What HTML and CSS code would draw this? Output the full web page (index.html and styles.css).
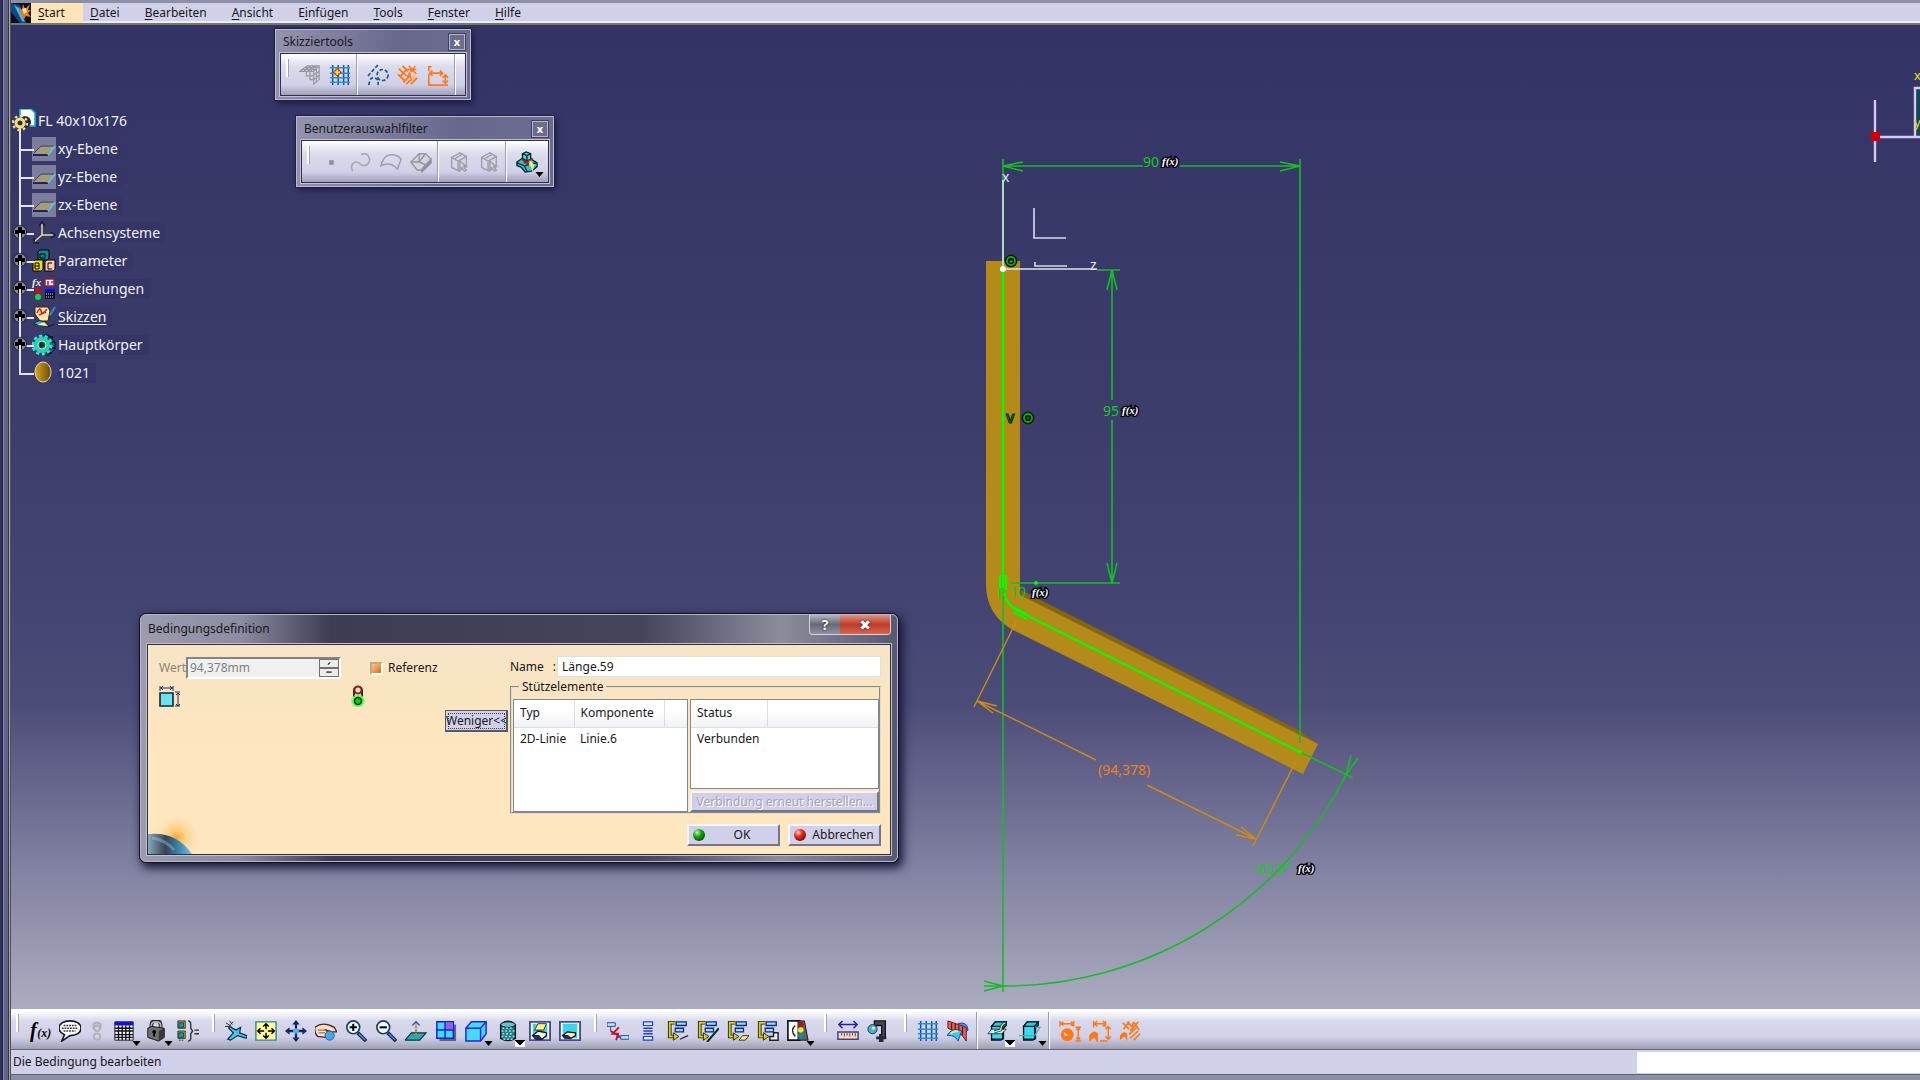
FILE: index.html
```html
<!DOCTYPE html>
<html lang="de">
<head>
<meta charset="utf-8">
<title>FL 40x10x176</title>
<link rel="stylesheet" href="styles.css">
</head>
<body>
<svg class="sprite" aria-hidden="true">
  <defs>
    <linearGradient id="ball" x1="0" x2="1"><stop offset="0" stop-color="#d9a520"/><stop offset="1" stop-color="#6b4c05"/></linearGradient>
    <radialGradient id="green" cx=".35" cy=".3" r=".7"><stop offset="0" stop-color="#c8ffb0"/><stop offset=".45" stop-color="#18b018"/><stop offset="1" stop-color="#085808"/></radialGradient>
    <radialGradient id="red" cx=".35" cy=".3" r=".7"><stop offset="0" stop-color="#ffd8c8"/><stop offset=".45" stop-color="#f03020"/><stop offset="1" stop-color="#801008"/></radialGradient>
    <radialGradient id="glow" cx=".55" cy=".45"><stop offset="0" stop-color="#ffa040"/><stop offset=".25" stop-color="#fbc870"/><stop offset="1" stop-color="#fbe6bf" stop-opacity="0"/></radialGradient>
    <linearGradient id="planet" x1="0" x2="1"><stop offset="0" stop-color="#88a8b8"/><stop offset=".4" stop-color="#344454"/><stop offset=".75" stop-color="#3c90b8"/><stop offset="1" stop-color="#80c0d8"/></linearGradient>
    <symbol id="grid" viewBox="0 0 24 24"><path d="M4 1v22M10 1v22M16 1v22M21 1v22" stroke="#2838d8" stroke-width="1.6"/><path d="M1 4h22M1 10h22M1 15h22M1 20h22" stroke="#18a0b0" stroke-width="1.6"/></symbol>
    <symbol id="fx" viewBox="0 0 24 24"><text x="1" y="19" class="ico-f">f</text><text x="9" y="19" class="ico-x">(x)</text></symbol>
    <symbol id="pick" viewBox="0 0 24 24" fill="none" stroke="#a0a0ac" stroke-width="1.6"><path d="M4 7l9-5 7 4v11l-8 5-8-4zM4 7l7 4 9-5M11 11v11M8 8l7-4"/><path d="M13 11v9l2-2 3 4 2-1-3-4h3z" fill="#d8d8e8"/></symbol>
    <symbol id="tree" viewBox="0 0 24 24"><path d="M9 3H3v15h5" fill="none" stroke="#222" stroke-width="4"/><path d="M9 3H3v15h6" fill="none" stroke="#ddd000" stroke-width="2"/><path d="M7 14l6 4-6 4z" fill="#ddd000" stroke="#222"/><path d="M10 2h11v4H10zM9 9h9v4H9z" fill="#80e8f0" stroke="#202080" stroke-width="1.4"/></symbol>
    <symbol id="plane" viewBox="0 0 24 24"><rect width="24" height="24" fill="#7d7d9e"/><path d="M2 17l7-7h13l-6 7z" fill="#a89c70"/><path d="M1 17h15v2H1z" fill="#20245c"/><path d="M16 18l7-9" stroke="#58c8d8" stroke-width="2"/><path d="M2 16l7-7h13" fill="none" stroke="#48486c"/></symbol>
    <symbol id="hatch" viewBox="0 0 24 24"><path d="M2 5l8 8M1 11l7 7M6 2l6 6M7 20l7-7M10 22l10-9M15 22l7-7M4 13l7-8M11 14l8-9" stroke="#ff7818" stroke-width="2"/><path d="M15 3v13M12 6h9M13 2l8 9M20 2l-7 9" stroke="#ff7818" stroke-width="1.6"/><path d="M14 7l8 8-4 0-1 5z" fill="#ffc8a0"/></symbol>
    <symbol id="snap" viewBox="0 0 24 24"><path d="M1 17q4-6 8-2v8l-3-5-5 4z" fill="#ff7818"/><path d="M4 3l7 7M9 2l6 6M16 2l6 9M21 2l-9 10M5 10l6-8M15 3v9M12 20l9-8M16 22l7-7M11 16l8-8" stroke="#ff7818" stroke-width="1.8"/></symbol>
    <symbol id="block" viewBox="0 0 24 24" stroke="#041828" stroke-width="1.4"><path d="M5 7l4-5h12v4l-3 3v11l-3 2H5z" fill="#108898"/><path d="M5 7h12v14H5z" fill="#38dcec"/><path d="M5 7l4-5h12l-4 5z" fill="#30c8d8"/></symbol>
    <symbol id="cursor-fx" viewBox="0 0 20 14"><text x="2" y="11" class="tag-fx">f(x)</text></symbol>
  </defs>
</svg>

<div class="app">
  <nav class="menubar" aria-label="Hauptmenü">
    <svg class="logo" viewBox="0 0 20 20"><rect width="20" height="20" fill="#08101e"/><path d="M0 0l9 2 6 18H9L0 9z" fill="#124880"/><path d="M3 2l5 3 6 14-3-1z" fill="#48b8e8"/><path d="M8 4l3 3 1-6 2 5 5-5-2 6 3 0-3 3 3 4-5-1-2 3-3-5z" fill="#f07818"/><path d="M11 6l4-1 1 4-3 2z" fill="#fff0a0"/></svg>
    <button class="menu menu-active"><u>S</u>tart</button>
    <button class="menu"><u>D</u>atei</button>
    <button class="menu"><u>B</u>earbeiten</button>
    <button class="menu"><u>A</u>nsicht</button>
    <button class="menu">E<u>i</u>nfügen</button>
    <button class="menu"><u>T</u>ools</button>
    <button class="menu"><u>F</u>enster</button>
    <button class="menu"><u>H</u>ilfe</button>
  </nav>

  <main class="canvas">
    <svg class="drawing" viewBox="11 25 1909 984" fill="none">
      <path d="M1021 590l279 141 18 13-10 3-290-146z" fill="#86650f"/>
      <path d="M986 261h34v334l298 149-15 30-290-144q-27-15-27-46z" fill="#b48a19"/>
      <g stroke="#14be24" stroke-width="1.6">
        <path d="M1003 159v833M1300 159v584M1003 166h140M1180 166h120M1023 162l-20 4 20 5M1280 162l20 4-20 5"/>
        <path d="M1097 270h23M1112 270v130M1112 420v163M1107 290l5-20 5 20M1107 563l5 20 5-20M1011 583h109"/>
        <path d="M1300 752l53 26M1346 775A383 383 0 0 1 1003 986h-19M1346 775l5-20M1346 775l12-17M984 981l19 5-19 5"/>
      </g>
      <g stroke="#d08a12" stroke-width="1.4">
        <path d="M1017 620l-43 87M1297 759l-44 87M977 701l119 59M1147 785l109 54M997 706l-20-5 16 12M1241 827l15 12-20-4"/>
      </g>
      <path d="M1003 269v314q0 20 15 28l282 141" stroke="#0f0" stroke-width="2.4"/>
      <path d="M1000 575v15M1006 575v15M1014 607l14 8M1013 612l14 7" stroke="#0f0" stroke-width="2"/>
      <circle cx="1036" cy="583" r="2" fill="#0f0"/><circle cx="1300" cy="752" r="2" fill="#0f0"/>
      <path d="M1003 180v89h94" stroke="#d8e8e0" stroke-width="1.6"/>
      <path d="M1034 208v30h32M1035 262v4h32" stroke="#dcd8f0" stroke-width="1.6"/>
      <circle cx="1003" cy="269" r="3" fill="#fff"/>
      <g class="axis"><text x="1002" y="182">x</text><text x="1090" y="270">z</text></g>
      <g class="dim"><text x="1143" y="167">90</text><text x="1103" y="416">95</text><text x="997" y="598">R</text><text x="1010" y="597">10</text><text x="1257" y="874">63.5°</text></g>
      <text x="1098" y="775" class="dim-ref">(94,378)</text>
      <g stroke="#052008" stroke-width="5"><circle cx="1011" cy="261" r="4"/><circle cx="1028" cy="418" r="4"/></g>
      <g stroke="#10a818" stroke-width="1.8"><circle cx="1011" cy="261" r="4"/><circle cx="1028" cy="418" r="4"/></g>
      <text x="1006" y="423" class="vertical">V</text>
      <use href="#cursor-fx" x="1160" y="154" width="20" height="14"/>
      <use href="#cursor-fx" x="1120" y="403" width="20" height="14"/>
      <use href="#cursor-fx" x="1030" y="585" width="20" height="14"/>
      <use href="#cursor-fx" x="1296" y="861" width="20" height="14"/>
    </svg>

    <svg class="compass" viewBox="0 0 60 120"><path d="M56 34h6v47h-6z" fill="#104858"/><path d="M15 45v62M15 82h45M55 82V33h6" fill="none" stroke="#d8c8f4" stroke-width="2.4"/><rect x="11" y="77" width="9" height="9" fill="#d40000"/><text x="54" y="25">x</text><text x="54" y="72">y</text></svg>

    <ul class="tree">
      <li class="root"><svg class="root-icon" viewBox="0 0 24 24"><path d="M8 0h11l4 4v13H8z" fill="#fff" stroke="#18b8c8" stroke-width="1.6"/><circle cx="13" cy="13" r="6" fill="#282840"/><circle cx="8" cy="14" r="4" fill="none" stroke="#f0e080" stroke-width="3"/><circle cx="8" cy="14" r="7" fill="none" stroke="#f0e080" stroke-width="2.4" stroke-dasharray="2.500 3"/><circle cx="8" cy="14" r="2" fill="#383010"/></svg><span>FL 40x10x176</span></li>
      <li><svg class="tree-icon"><use href="#plane"/></svg><span>xy-Ebene</span></li>
      <li><svg class="tree-icon"><use href="#plane"/></svg><span>yz-Ebene</span></li>
      <li><svg class="tree-icon"><use href="#plane"/></svg><span>zx-Ebene</span></li>
      <li class="node"><svg class="tree-icon" viewBox="0 0 24 24" fill="none" stroke="#e8dc90" stroke-width="1.5"><path d="M10 2v12h12M10 14l-8 7"/><path d="M7 5l3-4 3 4M19 11l4 3-4 3M2 17v5h5" stroke="#181840"/></svg><span>Achsensysteme</span></li>
      <li class="node"><svg class="tree-icon" viewBox="0 0 24 24" stroke="#000"><path d="M6 3l2-2h9v8l-2 2H6z" fill="#108890"/><path d="M1 13l2-2h8v9l-2 2H1z" fill="#e8e020"/><path d="M13 13l2-2h8v9l-2 2h-8z" fill="#f8c8b0"/><path d="M8 5h5v4H8zM3 14h4v6H3zM3 17h4M20 14h-4v6h4" fill="none"/></svg><span>Parameter</span></li>
      <li class="node"><svg class="tree-icon" viewBox="0 0 24 24"><text x="0" y="9" class="mini">fx</text><path d="M13 2h9v7h-9zM15 5h2M19 5h2M15 7h2" fill="#fff" stroke="#b01030" stroke-width="1.5"/><circle cx="6" cy="14" r="3" fill="#e00018"/><circle cx="6" cy="20" r="3" fill="#10d840"/><path d="M13 12h10v10H13z" fill="#101018"/><path d="M13 12h10v3H13z" fill="#0010f0"/><path d="M14 17h8M14 20h8" stroke="#ddd" stroke-dasharray="1 1"/></svg><span>Beziehungen</span></li>
      <li class="node"><svg class="tree-icon" viewBox="0 0 24 24"><path d="M3 2h13l2 4-2 10H8L3 9z" fill="#ffe8a8" stroke="#302810"/><path d="M5 8q3-7 4-2t6-2M7 10l7-3" fill="none" stroke="#d02020" stroke-width="1.5"/><path d="M23 2l-5 8" stroke="#2098b8" stroke-width="2"/><path d="M2 19q5-6 10-1t11 1l-8 3z" fill="#30b8d0" stroke="#102040"/><path d="M5 20l7-3 4 4z" fill="#fff4a0"/></svg><span><u>Skizzen</u></span></li>
      <li class="node"><svg class="tree-icon" viewBox="0 0 24 24"><path d="M9 2h8l6 7v7l-6 6H9z" fill="#106878" stroke="#041828"/><path d="M14 4h7M17 9h6M16 15h7M14 20h6" stroke="#061830" stroke-width="2"/><circle cx="10" cy="12" r="9" fill="none" stroke="#38e0d8" stroke-width="3" stroke-dasharray="3.200 2.400"/><circle cx="10" cy="12" r="6" fill="none" stroke="#28d0c0" stroke-width="4"/><circle cx="10" cy="12" r="4" fill="none" stroke="#e8f060"/><circle cx="10" cy="12" r="2" fill="#103048"/></svg><span>Hauptkörper</span></li>
      <li class="last"><svg class="tree-icon" viewBox="0 0 24 24"><ellipse cx="11" cy="11" rx="8" ry="10" fill="url(#ball)" stroke="#e8dcb0"/></svg><span>1021</span></li>
    </ul>

    <section class="palette palette-sketch">
      <header><h2>Skizziertools</h2><button class="palette-close" aria-label="Schließen">x</button></header>
      <div class="palette-bar">
        <i class="handle"></i>
        <button class="tool" aria-label="Rasteransicht"><svg viewBox="0 0 24 24" fill="none" stroke="#9898a4" stroke-width="1.3"><path d="M1 8l8-6h13v15l-6 5V8zM1 8h15M4 6h15M6 4h13M5 8l8-6M9 8l8-6M12 8l7-6M16 12l6-4M16 17l6-5M16 8l6-6M19 5v15M8 8v5h8M12 8v9h4"/></svg></button>
        <button class="tool" aria-label="Raster"><svg viewBox="0 0 24 24"><use href="#grid"/><path d="M9 4l5 5-5 5-5-5z" fill="#e81010"/><path d="M9 6v6M6 9h6" stroke="#ff0" stroke-width="2"/></svg></button>
        <i class="rule"></i>
        <button class="tool" aria-label="Konstruktionselement"><svg viewBox="0 0 24 24" fill="none" stroke="#185888" stroke-width="1.8"><circle cx="17" cy="12" r="6" stroke-dasharray="4 2"/><path d="M1 13L12 1" stroke-dasharray="4 2"/><path d="M2 23q1-9 6-8t4 8" stroke-dasharray="4 2"/></svg></button>
        <button class="tool" aria-label="Geometrische Bedingungen"><svg><use href="#hatch"/></svg></button>
        <button class="tool" aria-label="Bemaßungsbedingungen"><svg viewBox="0 0 24 24" fill="none" stroke="#ff7818" stroke-width="1.8"><path d="M5 3H2v5M2 11v12h21M3 10h14M6 7l-3 3 3 3M14 7l3 3-3 3M20 12v9M17 15l3-3 3 3M17 18l3 3 3-3"/></svg></button>
        <i class="rule"></i>
      </div>
    </section>

    <section class="palette palette-filter">
      <header><h2>Benutzerauswahlfilter</h2><button class="palette-close" aria-label="Schließen">x</button></header>
      <div class="palette-bar">
        <i class="handle"></i>
        <button class="tool" aria-label="Punktfilter"><svg viewBox="0 0 24 24"><path d="M10 10h5v5h-5z" fill="#90909c"/></svg></button>
        <button class="tool" aria-label="Kurvenfilter"><svg viewBox="0 0 24 24" fill="none" stroke="#a8a8b4" stroke-width="1.8"><path d="M3 22c-3-6 0-10 4-10 4 0 4 4 8 4 5 0 7-5 6-8-1-5-5-6-9-4"/></svg></button>
        <button class="tool" aria-label="Flächenfilter"><svg viewBox="0 0 24 24" fill="none" stroke="#a0a0ac" stroke-width="1.6"><path d="M1 16Q4 4 12 4t11 5l-4 11q-7-9-18-4z"/></svg></button>
        <button class="tool" aria-label="Volumenfilter"><svg viewBox="0 0 24 24" stroke="#9898a4" stroke-width="1.5"><path d="M1 12l9-9h7l6 6-11 12H8z" fill="#d4d4e0"/><path d="M12 21l11-12v4l-10 10z" fill="#888894"/><path d="M10 3v9l-9 0M10 12l7 3M17 3l-7 9" fill="none"/></svg></button>
        <i class="rule"></i>
        <button class="tool" aria-label="Elementauswahl"><svg><use href="#pick"/></svg></button>
        <button class="tool" aria-label="Teileauswahl"><svg><use href="#pick"/></svg></button>
        <i class="rule"></i>
        <button class="tool" aria-label="Arbeitsmodus"><svg viewBox="0 0 24 24" stroke="#041c24" stroke-width="1.4"><path d="M1 12l6-4 10 1 6 4v4l-6 5-7 1-4-5-5-2z" fill="#28c8d0"/><path d="M7 3l4-2 5 2v6l-4 2-5-3z" fill="#38dce4"/><path d="M7 3l5 2 4-2M12 5v5M1 13l8 3 3 6M10 16l12-3" fill="none"/><path d="M6 9l6 3 6-4M8 12l8 2" stroke="#b01828" stroke-width="2" fill="none"/><path d="M15 10l-1 6h2l2 7 2-8z" fill="#ffe870" stroke="none"/></svg><i class="drop"></i></button>
      </div>
    </section>

    <section class="dialog" role="dialog" aria-labelledby="dlg-title">
      <header class="dialog-title"><h1 id="dlg-title">Bedingungsdefinition</h1>
        <div class="caption"><button class="caption-help" aria-label="Hilfe">?</button><button class="caption-close" aria-label="Schließen">✖</button></div>
      </header>
      <form class="dialog-body">
        <div class="value-pane">
          <div class="value-row">
            <label for="wert">Wert</label>
            <span class="spin"><input id="wert" value="94,378mm" disabled><span class="spin-buttons"><button type="button" aria-label="Mehr"><svg viewBox="0 0 17 9"><path d="M7 6l3-3" stroke="#222" stroke-width="1.5"/></svg></button><button type="button" aria-label="Weniger"><svg viewBox="0 0 17 9"><path d="M5 4h7" stroke="#444" stroke-width="2"/></svg></button></span></span>
            <label class="check"><input type="checkbox" checked>Referenz</label>
          </div>
          <div class="marks">
            <svg viewBox="0 0 22 22"><path d="M1 8h13v13H1z" fill="#68e4f0" stroke="#0c2838" stroke-width="1.6"/><path d="M1 1v5M14 1v5M1 3h13M4 1L2 3l2 2M11 1l2 2-2 2M16 7h5M16 21h5M19 8v13M17 10l2-2 2 2M17 19l2 2 2-2" fill="none" stroke="#282860"/></svg>
            <svg viewBox="0 0 22 22"><path d="M7 12V6q0-4 4-4t4 4v6" fill="none" stroke="#222" stroke-width="2"/><circle cx="11" cy="5" r="3.500" fill="#fdd" stroke="#a01820" stroke-width="2"/><circle cx="11" cy="16" r="6" fill="#68f848" stroke="#78f860" stroke-width="2" stroke-dasharray="1 1"/><circle cx="11" cy="16" r="3.500" fill="#10c818" stroke="#043808" stroke-width="1.600"/></svg>
          </div>
        </div>
        <button type="button" class="less">Weniger&lt;&lt;</button>
        <div class="detail-pane">
          <div class="name-row"><label for="name">Name</label><span>:</span><input id="name" value="Länge.59"></div>
          <fieldset>
            <legend>Stützelemente</legend>
            <div class="list list-parts"><table><thead><tr><th class="col-type">Typ</th><th class="col-part">Komponente</th><th></th></tr></thead><tbody><tr><td>2D-Linie</td><td>Linie.6</td><td></td></tr></tbody></table></div>
            <div class="status-side">
              <div class="list"><table><thead><tr><th class="col-status">Status</th><th></th></tr></thead><tbody><tr><td>Verbunden</td><td></td></tr></tbody></table></div>
              <button type="button" class="push" disabled>Verbindung erneut herstellen...</button>
            </div>
          </fieldset>
          <div class="actions">
            <button type="button" class="push"><svg viewBox="0 0 14 14"><circle cx="7" cy="7" r="6" fill="url(#green)"/></svg><span>OK</span></button>
            <button type="button" class="push"><svg viewBox="0 0 14 14"><circle cx="7" cy="7" r="6" fill="url(#red)"/></svg><span>Abbrechen</span></button>
          </div>
        </div>
        <svg class="sunrise" viewBox="0 0 54 40"><circle cx="26" cy="26" r="25" fill="url(#glow)"/><path d="M0 20q28-3 44 20H0z" fill="url(#planet)"/><path d="M4 24q14 2 22 12" fill="none" stroke="#a8c8d8" stroke-width="3" opacity=".4"/></svg>
      </form>
    </section>
  </main>

  <div class="toolbar" role="toolbar" aria-label="Werkzeuge">
    <i class="handle"></i>
    <button class="tool" aria-label="Formel"><svg><use href="#fx"/></svg></button>
    <button class="tool" aria-label="Kommentar"><svg viewBox="0 0 24 24"><path d="M12 1c7 0 12 3 12 8 0 5-5 8-12 8l-9 6 3-7C2 14 0 12 0 9c0-5 5-8 12-8z" fill="#fff" stroke="#181820" stroke-width="1.8"/><path d="M5 6h14M3 9h17M5 12h13" stroke="#333" stroke-width="1.4" stroke-dasharray="2 1"/></svg></button>
    <button class="tool tool-narrow" aria-label="Verknüpfung"><svg viewBox="0 0 24 24" fill="none" stroke="#b0b0bc" stroke-width="2"><path d="M8 10V6q0-3 4-3t4 3v4"/><circle cx="12" cy="9" r="3"/><circle cx="12" cy="18" r="3.500"/></svg></button>
    <button class="tool tool-menu" aria-label="Konstruktionstabelle"><svg viewBox="0 0 24 24"><path d="M2 2h20v20H2z" fill="#fff" stroke="#101030"/><path d="M2 2h20v4H2z" fill="#1010d8"/><path d="M2 9h20M2 12h20M2 16h20M2 19h20M6 6v16M10 6v16M14 6v16M18 6v16" stroke="#101018" stroke-width="1.5"/></svg><i class="drop"></i></button>
    <button class="tool tool-menu" aria-label="Sperren"><svg viewBox="0 0 24 24"><path d="M7 11V5q0-4 5-4t5 4v6" fill="none" stroke="#222" stroke-width="4"/><path d="M7 11V5q0-3 5-3t5 3v6" fill="none" stroke="#b8b8b8" stroke-width="1.8"/><path d="M3 9l4-2 14 2v10l-6 4-12-4z" fill="#707070" stroke="#111"/><path d="M15 12l6-3v10l-6 4z" fill="#383838"/><circle cx="10" cy="13" r="2"/><path d="M10 13v5" stroke="#000" stroke-width="2"/></svg><i class="drop"></i></button>
    <button class="tool" aria-label="Äquivalente Bemaßungen"><svg viewBox="0 0 24 24"><path d="M1 1h8v8H1zM1 12h8v8H1z" fill="#a8b030" stroke="#303010"/><path d="M2 3h5v5H2zM2 14h5v5H2z" fill="#10a0b0" stroke="#104050"/><path d="M2 22h6" stroke="#333" stroke-dasharray="2 1"/><path d="M12 1q3 0 3 4v4l2 3-2 3v4q0 4-3 4M19 11h5M19 15h5" fill="none" stroke="#333" stroke-width="1.5"/></svg></button>
    <i class="handle"></i>
    <button class="tool" aria-label="Flugmodus"><svg viewBox="0 0 24 24"><path d="M5 7l7 4 5-3-1 6 8 3-1 3-9-3-8 5-3-1 6-7-5-5z" fill="#40c8e0" stroke="#102850" stroke-width="1.3"/><path d="M1 3l6 4M0 7h5M5 1l3 4M9 2l-3 3" stroke="#222"/></svg></button>
    <button class="tool" aria-label="Alles einpassen"><svg viewBox="0 0 24 24"><path d="M1 2h22v20H1z" fill="#ffff9c" stroke="#208890" stroke-width="1.5"/><path d="M12 4v6M12 14v6M3 12h7M14 12h7M9 7l3-3 3 3M9 17l3 3 3-3M6 9l-3 3 3 3M18 9l3 3-3 3" fill="none" stroke="#000" stroke-width="1.6"/></svg></button>
    <button class="tool" aria-label="Verschieben"><svg viewBox="0 0 24 24"><path d="M12 2v20M2 12h20" stroke="#102868" stroke-width="2.5"/><path d="M12 0l4 5H8zM12 24l4-5H8zM0 12l5-4v8zM24 12l-5-4v8z" fill="#102868"/><path d="M12 9v6M9 12h6" stroke="#40c8e0" stroke-width="2"/></svg></button>
    <button class="tool" aria-label="Drehen"><svg viewBox="0 0 24 24"><path d="M0 8q8-7 21 0l3 5-6 0-6-2 4 5-5 3-8-1q-4-4-3-10z" fill="#ffdcc0" stroke="#402820" stroke-width="1.4"/><circle cx="16" cy="17" r="5" fill="#48a8e8" stroke="#1858a0"/><path d="M3 11h10M4 14h7" stroke="#805040"/></svg></button>
    <button class="tool" aria-label="Vergrößern"><svg viewBox="0 0 24 24"><path d="M14 14l9 9" stroke="#102858" stroke-width="4"/><path d="M15 15l7 7" stroke="#38a8d8" stroke-width="1.4"/><circle cx="9" cy="8" r="7" fill="#f0ffff" stroke="#184058" stroke-width="1.8"/><path d="M5 8h8M9 4v8" stroke="#000" stroke-width="2.2"/></svg></button>
    <button class="tool" aria-label="Verkleinern"><svg viewBox="0 0 24 24"><path d="M14 14l9 9" stroke="#102858" stroke-width="4"/><path d="M15 15l7 7" stroke="#38a8d8" stroke-width="1.4"/><circle cx="9" cy="8" r="7" fill="#f0ffff" stroke="#184058" stroke-width="1.8"/><path d="M5 8h8" stroke="#000" stroke-width="2.2"/></svg></button>
    <button class="tool" aria-label="Senkrechte Ansicht"><svg viewBox="0 0 24 24"><path d="M7 14h16l-7 8H0z" fill="#28a8b0" stroke="#083840" stroke-width="1.3"/><path d="M12 17V2" stroke="#c08020" stroke-width="2" stroke-dasharray="3 1"/><path d="M8 6l4-4 4 4" fill="none" stroke="#4058c0" stroke-width="1.6"/></svg></button>
    <button class="tool" aria-label="Mehrfachansicht"><svg viewBox="0 0 24 24"><path d="M5 5h18v18H5z" fill="#606088"/><path d="M2 2h18v18H2z" fill="#40dcff" stroke="#1420d8" stroke-width="1.6"/><path d="M12 3h7v8h-7z" fill="#a858e0"/><path d="M11 2v18M2 11h18" stroke="#1420d8" stroke-width="1.6"/></svg></button>
    <button class="tool tool-menu" aria-label="Isometrische Ansicht"><svg viewBox="0 0 24 24" stroke="#1828d8" stroke-width="1.6"><path d="M1 9l6-7h16v13l-6 8H1z" fill="#48d8ff"/><path d="M1 9h16v14M17 9l6-7" fill="none"/></svg><i class="drop"></i></button>
    <button class="tool tool-menu" aria-label="Schattierung"><svg viewBox="0 0 24 24"><path d="M4 5q8-7 16 0v15q-8 5-16 0z" fill="#207c88" stroke="#101820" stroke-width="1.6"/><ellipse cx="12" cy="5" rx="8" ry="3" fill="#68c0c8" stroke="#101820"/><path d="M6 9h12M5 12h14M6 15h12M5 18h14M7 21h10" stroke="#a0e8e8" stroke-width="1.5" stroke-dasharray="2 2"/></svg><i class="drop drop-lit"></i></button>
    <button class="tool" aria-label="Verdecken/Anzeigen"><svg viewBox="0 0 24 24"><path d="M1 2h22v20H1z" fill="#fff" stroke="#484890" stroke-width="2"/><path d="M4 4h16v16H4z" fill="#38d8ec"/><path d="M6 11l4-7h9l-3 7z" fill="#fff080" stroke="#383010"/><path d="M4 17l6-5 9 2v3l-5 4z" fill="#f8f8e0" stroke="#101020" stroke-width="1.4"/><path d="M4 17l7 0 3 4H7z" fill="#203080" stroke="#101020"/></svg></button>
    <button class="tool" aria-label="Sichtbaren Raum umschalten"><svg viewBox="0 0 24 24"><path d="M1 2h22v20H1z" fill="#fff" stroke="#484890" stroke-width="2"/><path d="M4 4h16v16H4z" fill="#38d8ec"/><path d="M4 17l5-4 9 1v3l-5 3z" fill="#fff4a0" stroke="#101020" stroke-width="1.4"/><path d="M4 17l6 0 3 3H6z" fill="#203080" stroke="#101020"/></svg></button>
    <i class="handle"></i>
    <button class="tool" aria-label="Verknüpfung trennen"><svg viewBox="0 0 24 24"><path d="M0 3h9v4H0zM15 17h9v4h-9z" fill="#a8f0f8" stroke="#2838a8"/><path d="M4 7v5M11 19h4" stroke="#2838a8"/><path d="M13 8l-7 7h6l-2 7M4 12l10 6" fill="none" stroke="#c01028" stroke-width="2"/></svg></button>
    <button class="tool" aria-label="Liste"><svg viewBox="0 0 24 24"><path d="M7 2h10v4H7zM7 18h10v4H7z" fill="#c8f8f8" stroke="#2838d8" stroke-width="1.3"/><path d="M7 9h10M7 12h10M7 15h10" stroke="#2838d8" stroke-width="1.5"/></svg></button>
    <button class="tool" aria-label="Linie einfügen"><svg viewBox="0 0 24 24"><use href="#tree"/><path d="M14 21l9-4" stroke="#222" stroke-width="1.4"/></svg></button>
    <button class="tool" aria-label="Achse einfügen"><svg viewBox="0 0 24 24"><use href="#tree"/><path d="M11 24L24 9" stroke="#043020" stroke-width="2.2"/></svg></button>
    <button class="tool" aria-label="Ebene einfügen"><svg viewBox="0 0 24 24"><use href="#tree"/><path d="M13 22l4-5h7l-4 5z" fill="#f8e880" stroke="#302810"/></svg></button>
    <button class="tool" aria-label="Profil einfügen"><svg viewBox="0 0 24 24"><use href="#tree"/><path d="M14 22v-4h4v-4h5v8z" fill="#eee" stroke="#222" stroke-width="1.6"/></svg></button>
    <button class="tool tool-menu" aria-label="Skizzenanalyse"><svg viewBox="0 0 24 24"><path d="M1 1h13v21H1z" fill="#fff" stroke="#111" stroke-width="1.8"/><path d="M12 1h7l4 21H12z" fill="#606060" stroke="#111"/><path d="M9 6q-6 5 0 12" fill="none" stroke="#222" stroke-width="1.5"/><circle cx="15" cy="5" r="3" fill="#b81018"/><circle cx="15" cy="11" r="3" fill="#f8e820"/><circle cx="15" cy="17" r="3" fill="#109098"/></svg><i class="drop"></i></button>
    <i class="handle"></i>
    <button class="tool" aria-label="Messen zwischen"><svg viewBox="0 0 24 24"><path d="M2 5h20M6 1L2 5l4 4M18 1l4 4-4 4" fill="none" stroke="#2020a8" stroke-width="1.6"/><path d="M1 13h22v8H1z" fill="#ffd8c0" stroke="#304890" stroke-width="1.6"/><path d="M5 14v3M8 14v4M11 14v3M14 14v4M17 14v3M20 14v4" stroke="#803030"/></svg></button>
    <button class="tool" aria-label="Element messen"><svg viewBox="0 0 24 24"><path d="M8 1h12v18h-6v-3h2V6H8z" fill="#484850" stroke="#101018" stroke-width="1.4"/><path d="M10 18h11v3h-3v3h-5v-3h-3z" fill="#282830"/><circle cx="6" cy="10" r="5" fill="#40b0d8" stroke="#103058"/><circle cx="7" cy="9" r="2" fill="#d8f060"/></svg></button>
    <i class="handle handle-wide"></i>
    <button class="tool" aria-label="Gitter"><svg><use href="#grid"/></svg></button>
    <button class="tool" aria-label="Teil schneiden"><svg viewBox="0 0 24 24"><path d="M12 4q10-3 11 7l-8 5z" fill="#28a0f0" stroke="#1838c0"/><path d="M1 1l20 7v15l-6-8-14-6z" fill="#d86858" stroke="#700c10"/><path d="M5 3v8M9 4v9M13 6v9M17 7v10" stroke="#800c10" stroke-width="1.4"/><path d="M0 17q6-10 16-5l-4 11q-3-7-12-6z" fill="#38c8f0" stroke="#1840b0"/><path d="M4 15q4-4 8-2" fill="none" stroke="#f0f060" stroke-width="2"/></svg></button>
    <i class="rule"></i>
    <button class="tool tool-menu" aria-label="3D-Projektion"><svg viewBox="0 0 24 24"><use href="#block"/><path d="M1 15l4-5h16l-5 5z" fill="#c8f4f8" stroke="#103840"/><path d="M20 3q-5 2-5 8l-7 2" fill="none" stroke="#103840" stroke-width="3"/><path d="M20 3q-5 2-5 8l-7 2" fill="none" stroke="#f8f0b0" stroke-width="1.4"/></svg><i class="drop drop-lit"></i></button>
    <button class="tool" aria-label="Schnitt"><svg viewBox="0 0 24 24"><use href="#block"/><path d="M0 17h17l6-9h-5" fill="none" stroke="#30b8c0" stroke-width="1.4"/></svg><i class="drop"></i></button>
    <i class="rule"></i>
    <button class="tool" aria-label="Bedingung"><svg viewBox="0 0 24 24"><circle cx="9" cy="16" r="7" fill="#ff7818"/><path d="M1 1v6M16 1v6M2 4h14M18 8h6M18 23h6M21 9v13M5 2L2 4l3 2M13 2l3 2-3 2M19 11l2-3 2 3M19 19l2 3 2-3" fill="none" stroke="#ff7818" stroke-width="1.6"/><path d="M5 13l5 4-4 0z" fill="#ffe0c0"/></svg></button>
    <button class="tool" aria-label="Bedingungen im Dialog"><svg viewBox="0 0 24 24" fill="none" stroke="#ff7818" stroke-width="1.6"><path d="M5 1v7M18 1v7M6 4h12M9 1L6 4l3 3M15 1l3 3-3 3M21 7v14M18 10l3-3 3 3M18 18l3 3 3-3M12 23h8"/><path d="M1 17q4-6 8-2v8l-3-5-5 4z" fill="#ff7818"/></svg></button>
    <button class="tool" aria-label="Automatische Bedingung"><svg><use href="#snap"/></svg></button>
  </div>

  <footer class="statusbar"><span>Die Bedingung bearbeiten</span><input aria-label="Befehlseingabe"></footer>
</div>
</body>
</html>
```
FILE: styles.css
```css
* { box-sizing: border-box; }

body {
  margin: 0;
  font: 12px/16px "Noto Sans", "Open Sans", sans-serif;
  color: #181820;
}

button, input { font: inherit; color: inherit; }
button { padding: 0; border: 0; background: none; }
h1, h2 { margin: 0; font: inherit; white-space: nowrap; }
.sprite { position: absolute; width: 0; height: 0; }

/* Window frame */
.app {
  display: flex;
  flex-direction: column;
  height: 100vh;
  padding: 3px 0 5px 11px;
  background: linear-gradient(90deg, #30305e 0 2px, #20203c 2px 3px, #8c8cac 3px 4px, #62628a 4px 8px, #34344c 8px 9px, #aaa9a0 9px 10px, #505058 10px 11px, #8c8fa6 11px);
}

.menubar {
  display: flex;
  flex: none;
  height: 22px;
  background: #d0d0e8;
  border-bottom: 2px solid #77776c;
  box-shadow: inset 0 -2px #ececf4;
}
.logo { width: 20px; height: 20px; }
.menu { padding: 0 18px 0 7px; }
.menu-active { background: #ffe4b8; }
u { text-underline-offset: 2px; }

/* Model view */
.canvas {
  position: relative;
  flex: 1;
  min-height: 0;
  overflow: hidden;
  background: linear-gradient(#333366, #3d3d6c 40%, #454573 60%, #4c4c79 69%, #7f7fa0 85%, #acacc0);
}
.drawing { position: absolute; inset: 0; width: 100%; height: 100%; }
.compass { position: absolute; top: 30px; right: 0; width: 60px; height: 120px; }
.compass text { font-size: 13px; fill: #e8e020; }
.axis { font-size: 14px; fill: #e8e8f4; }
.dim { font-size: 14px; fill: #10d018; }
.dim-ref { font-size: 14px; fill: #f08018; }
.vertical { font: bold 13px "Noto Sans", sans-serif; fill: #087010; stroke: #063808; }
.tag-fx { font: italic bold 11px "Liberation Serif", serif; fill: #fff; stroke: #080810; stroke-width: 3px; paint-order: stroke; }
.ico-f { font: italic bold 22px "Liberation Serif", serif; }
.ico-x { font: italic bold 13px "Liberation Serif", serif; }
.mini { font: italic bold 11px "Liberation Serif", serif; fill: #e8e8f0; }

.tree {
  position: relative;
  width: 200px;
  margin: 0;
  padding: 82px 0 0 21px;
  list-style: none;
  font-size: 14px;
  color: #f0f0fa;
}
.tree li { position: relative; display: flex; align-items: center; gap: 2px; height: 28px; }
.tree li::before { content: ""; position: absolute; left: -13px; top: -14px; width: 13px; height: 28px; border: solid #e4e4f0; border-width: 0 0 2px 2px; }
.tree .root { margin-left: -20px; z-index: 1; }
.tree .root::before { display: none; }
.tree .node::after {
  content: "";
  position: absolute;
  left: -18px;
  top: 7px;
  width: 12px;
  height: 12px;
  border-radius: 50%;
  background: linear-gradient(#000, #000) center / 10px 4px no-repeat, linear-gradient(#000, #000) center / 4px 10px no-repeat, #8c8c98;
  box-shadow: 0 0 1px 1px #24243c;
}
.tree-icon, .root-icon { width: 24px; height: 24px; flex: none; }
.tree span { padding-right: 6px; background: #353566; line-height: 20px; }

/* Floating palettes */
.palette {
  position: absolute;
  padding: 3px 4px;
  border: 1px solid #b8b8d0;
  background: linear-gradient(100deg, #9494ae, #68688c 60%, #6c6c90);
  box-shadow: 0 0 0 1px #202040, 2px 3px 6px #1c1c40;
}
.palette header { display: flex; justify-content: space-between; align-items: center; height: 18px; margin-bottom: 2px; padding: 0 1px 1px 3px; }
.palette-close { width: 16px; height: 16px; border: 1px solid #b4b4cc; outline: 1px solid #404060; background: #6c6c8c; color: #fff; font: bold 11px/12px "Noto Sans", sans-serif; }
.palette-bar { display: flex; align-items: center; height: 43px; padding-left: 5px; border: 1px solid #303048; outline: 1px solid #c0c0d4; background: linear-gradient(#fff, #dcdcee 30%, #d0d0e8 75%, #a0a0b8); }
.palette-sketch { left: 264px; top: 4px; width: 196px; }
.palette-filter { left: 285px; top: 91px; width: 258px; }

/* Tool buttons shared by palettes and the lower toolbar */
.tool { position: relative; flex: none; width: 30px; height: 30px; }
.tool svg { display: block; width: 22px; height: 22px; margin: 0 auto; }
.tool-narrow { width: 24px; }
.tool-menu { margin-right: 2px; }
.handle { flex: none; align-self: flex-start; width: 3px; height: 18px; margin: 5px 6px 0 9px; background: linear-gradient(90deg, #fff 2px, #a0a0b0 2px); }
.palette .handle { margin-left: 0; }
.rule { flex: none; width: 2px; height: 100%; margin: 0 5px 0 3px; background: linear-gradient(90deg, #9c9cac 1px, #fff 1px); }
.palette .rule { margin: 0 5px 0 1px; }
.drop { position: absolute; right: -2px; bottom: -1px; width: 9px; height: 6px; background: linear-gradient(#000, #000); clip-path: polygon(0 0, 100% 0, 50% 90%); }
.drop-lit { width: 10px; height: 7px; clip-path: none; background: conic-gradient(from -45deg at 50% 80%, #000 90deg, #fff 90deg); }

/* Constraint dialog */
.dialog {
  position: absolute;
  left: 129px;
  top: 589px;
  width: 758px;
  padding: 0 6px 6px;
  border: 1px solid #b8b8c8;
  border-radius: 6px;
  background: linear-gradient(90deg, #9c9cae, #8c8ca0 100px, #3c3c52 190px, #44445a 500px, #8c8c9c 640px, #585870);
  box-shadow: 0 0 0 1px #101020, 3px 4px 10px 2px #18183c;
}
.dialog-title { display: flex; justify-content: space-between; height: 29px; padding-left: 1px; }
.dialog-title h1 { line-height: 28px; }
.caption { display: flex; align-self: flex-start; border: 1px solid #d4d4e0; border-top: 0; border-radius: 0 0 4px 4px; overflow: hidden; }
.caption button { height: 19px; color: #fff; font: bold 14px/18px "Noto Sans", "DejaVu Sans", sans-serif; text-shadow: 0 0 2px #000; }
.caption-help { width: 30px; background: linear-gradient(#b4b4c0, #686878 50%, #9090a0); }
.caption-close { width: 50px; background: linear-gradient(#dc9484, #c03c28 50%, #d86450); }
.dialog-body {
  position: relative;
  display: flex;
  height: 211px;
  border: 1px solid #303040;
  outline: 1px solid #c0c0d0;
  background: linear-gradient(#f6e4c4, #fee6be 50%, #fee6be);
}
.value-pane { width: 297px; padding: 12px 0 0 11px; }
.value-row { display: flex; align-items: center; height: 22px; color: #8c8478; }
.spin { display: flex; flex: none; width: 155px; height: 22px; border: 2px solid #848484; border-right-color: #fff; border-bottom-color: #fff; background: #f0f0f0; }
.spin input { flex: 1; min-width: 0; border: 0; padding: 0 2px; background: none; color: #808080; line-height: 16px; }
.spin-buttons { display: flex; flex-direction: column; width: 20px; }
.spin-buttons button { flex: 1; border: 1px solid #707070; background: #ececec; line-height: 0; }
.spin-buttons svg { width: 16px; height: 7px; }
.check { display: flex; align-items: center; gap: 5px; margin-left: 29px; color: #181820; }
.check input { appearance: none; width: 13px; height: 13px; margin: 0; border: 2px solid #c0a880; border-right-color: #fff; border-bottom-color: #fff; background: linear-gradient(135deg, #ffc890, #d86818); }
.marks { display: flex; justify-content: space-between; width: 210px; margin-top: 6px; }
.marks svg { width: 22px; height: 22px; }
.less { flex: none; width: 63px; height: 22px; margin-top: 65px; overflow: hidden; border: 1px solid #585868; border-right-width: 2px; border-bottom-width: 2px; background: #d0d0e8; outline: 1px dotted #444; outline-offset: -4px; white-space: nowrap; }
.detail-pane { flex: 1; min-width: 0; padding: 11px 9px 0 2px; }
.name-row { display: flex; align-items: center; height: 21px; }
.name-row span { margin-left: 9px; }
.name-row input { flex: 1; height: 21px; margin-left: 1px; padding: 0 4px; border: 1px solid #d8e0e8; background: #fff; }
fieldset { display: flex; gap: 2px; min-width: 0; height: 135px; margin: 2px 0 0; padding: 4px 0 0 1px; border: 2px groove #e0dcd0; }
legend { padding: 0 3px; margin-left: 6px; line-height: 16px; }
.list { flex: 1; border: 1px solid #808894; background: #fff; }
.list-parts { flex: none; width: 175px; }
.status-side { display: flex; flex: 1; flex-direction: column; gap: 2px; min-width: 0; }
table { width: 100%; table-layout: fixed; border-collapse: collapse; }
th, td { height: 23px; padding: 0 0 0 6px; font-weight: 400; text-align: left; white-space: nowrap; }
th { height: 27px; background: linear-gradient(#fff 40%, #f0f1f4); border: solid #dcdce4; border-width: 0 1px 1px 0; }
th:last-child { border-right: 0; }
.col-type { width: 60px; }
.col-part { width: 90px; }
.col-status { width: 76px; }
.push { height: 22px; border: 2px solid #f4f4fc; border-right-color: #74748c; border-bottom-color: #74748c; background: #d0d0e8; white-space: nowrap; }
.push:disabled { height: 21px; line-height: 16px; color: #a4a4b8; text-shadow: 1px 1px #fff; overflow: hidden; }
.actions { display: flex; justify-content: flex-end; gap: 8px; margin-top: 10px; }
.actions .push { display: flex; align-items: center; width: 93px; padding-left: 3px; }
.actions svg { flex: none; width: 14px; height: 14px; }
.actions span { flex: 1; text-align: center; }
.sunrise { position: absolute; left: 0; bottom: 0; width: 54px; height: 40px; }

/* Lower toolbar and status line */
.toolbar { display: flex; flex: none; align-items: center; height: 41px; padding-top: 3px; border-bottom: 1px solid #686874; background: linear-gradient(#fff 2px, #d8d8ec 12px, #d0d0e8 28px, #a0a0b4); }
.toolbar .handle { margin-top: 2px; }
.toolbar .handle:first-child { margin-left: 5px; }
.toolbar .handle-wide { margin-left: 11px; }
.statusbar { display: flex; flex: none; align-items: center; justify-content: space-between; height: 25px; padding-left: 2px; border-bottom: 1px solid #606070; background: #d0d0e8; }
.statusbar input { width: 283px; height: 21px; border: 0; background: #fff; }
```
